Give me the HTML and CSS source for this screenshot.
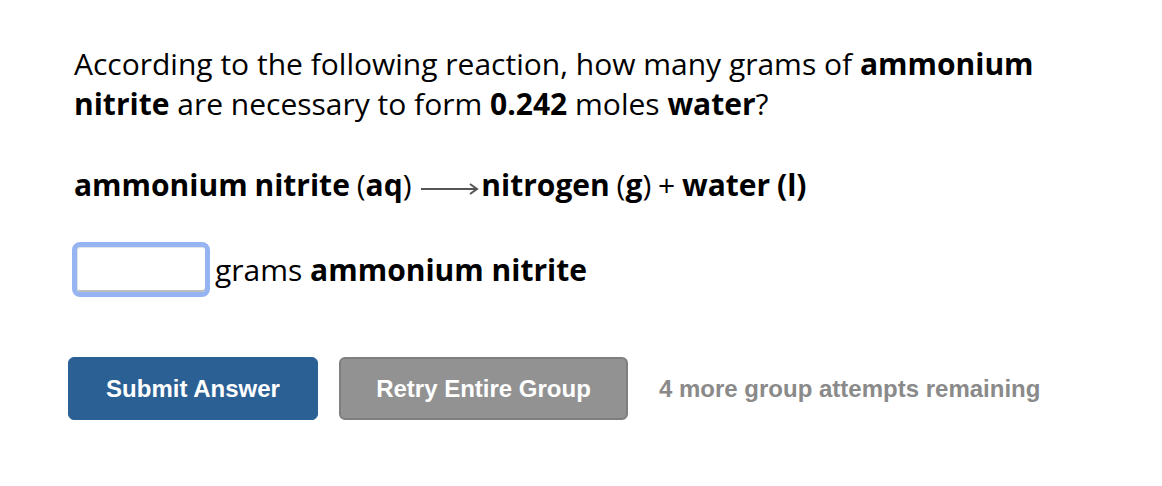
FILE: index.html
```html
<!DOCTYPE html>
<html>
<head>
<meta charset="utf-8">
<link rel="stylesheet" href="styles.css">
</head>
<body>
<div class="page">
  <p class="question">According to the following reaction, how many grams of <b>ammonium nitrite</b> are necessary to form <b>0.242</b> moles <b>water</b>?</p>
  <p class="reaction"><b>ammonium nitrite</b> <span class="par">(</span><b>aq</b><span class="par">)</span> <svg class="arrow" width="58" height="16" viewBox="0 0 58 16"><line x1="0" y1="8" x2="55" y2="8" stroke="#555" stroke-width="2"/><polyline points="49,3 56,8 49,13" fill="none" stroke="#555" stroke-width="2"/></svg><b>nitrogen</b> <span class="par">(</span><b>g</b><span class="par">)</span> + <b>water</b> <b>(l)</b></p>
  <div class="answer">
    <span class="box"></span>
    <span class="unit">grams <b>ammonium nitrite</b></span>
  </div>
  <div class="actions">
    <button class="btn submit">Submit Answer</button>
    <button class="btn retry">Retry Entire Group</button>
    <span class="remaining">4 more group attempts remaining</span>
  </div>
</div>
</body>
</html>
```
FILE: styles.css
```css
html, body { margin: 0; padding: 0; background: #fff; }
.page {
  padding: 44px 0 0 74px;
  font-family: "Open Sans", sans-serif;
  color: #000;
  font-size: 30px;
}
.question { margin: 0; line-height: 40px; width: 980px; }
.question b, .reaction b, .unit b { font-weight: 700; }
.reaction { margin: 41px 0 0 0; line-height: 40px; word-spacing: -1px; }
.par { font-weight: 400; }
.arrow { display: inline-block; vertical-align: -1px; margin-left: 3px; margin-right: 2px; }
.answer { display: flex; align-items: center; margin: 37px 0 0 -2px; gap: 5px; }
.box {
  display: block;
  flex: none;
  box-sizing: border-box;
  width: 138px; height: 55px;
  border: 5px solid #97b4f2;
  border-radius: 8px;
  background: #fff;
  box-shadow: inset 1px 1px 0 #e4e4e4, inset 0 -2px 0 #bdbdbd;
}
.unit { line-height: 40px; }
.actions { display: flex; align-items: center; margin: 60px 0 0 -6px; }
.btn {
  font-family: "Liberation Sans", Arial, sans-serif;
  font-weight: 700;
  font-size: 24px;
  color: #fff;
  height: 63px;
  border-radius: 6px;
  cursor: pointer;
}
.submit { width: 250px; background: #2b6094; border: 1px solid #2b6094; }
.retry { width: 289px; background: #929292; border: 2px solid #7f7f7f; margin-left: 21px; }
.remaining {
  font-family: "Liberation Sans", Arial, sans-serif;
  font-weight: 700;
  font-size: 24px;
  color: #8a8a8a;
  margin-left: 31px;
}
```
